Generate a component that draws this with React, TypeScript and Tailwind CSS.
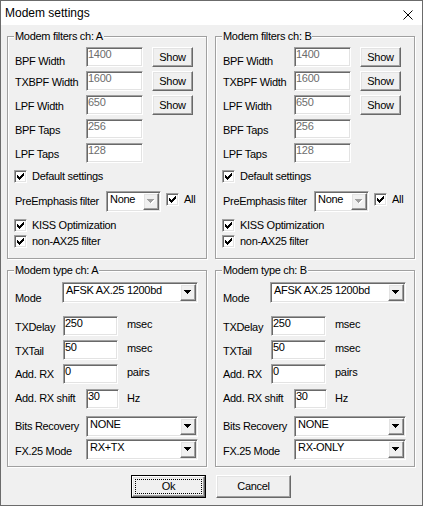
import React from 'react';

// classic win32 3D edges
const sunken =
  'border border-t-[#a0a0a0] border-l-[#a0a0a0] border-b-white border-r-white shadow-[inset_1px_1px_0_#696969,inset_-1px_-1px_0_#e3e3e3]';
const raised =
  'border border-t-white border-l-white border-b-[#696969] border-r-[#696969] shadow-[inset_-1px_-1px_0_#a0a0a0,inset_1px_1px_0_#e3e3e3]';

const CheckMark: React.FC = () => (
  <svg className="block" width="7" height="7" viewBox="0 0 7 7" shapeRendering="crispEdges">
    <path
      fill="#000"
      d="M6 0h1v1h-1z M5 1h2v1h-2z M0 2h1v1h-1z M4 2h3v1h-3z M0 3h2v1h-2z M3 3h3v1h-3z M0 4h5v1h-5z M1 5h3v1h-3z M2 6h1v1h-1z"
    />
  </svg>
);

const Arrow: React.FC<{ disabled?: boolean }> = ({ disabled }) => (
  <svg className="block" width="8" height="5" viewBox="0 0 8 5" shapeRendering="crispEdges">
    {disabled && <path fill="#fff" d="M1 1h7v1h-7z M2 2h5v1h-5z M3 3h3v1h-3z M4 4h1v1h-1z" />}
    <path
      fill={disabled ? '#a0a0a0' : '#000'}
      d="M0 0h7v1h-7z M1 1h5v1h-5z M2 2h3v1h-3z M3 3h1v1h-1z"
    />
  </svg>
);

const Edit: React.FC<{ value: string; className?: string; disabled?: boolean }> = ({
  value,
  className = '',
  disabled,
}) => (
  <div
    className={`${sunken} h-[20px] bg-white pl-[1px] leading-[13px] shrink-0 ${
      disabled ? 'text-[#6d6d6d]' : 'text-black'
    } ${className}`}
  >
    {value}
  </div>
);

const Combo: React.FC<{ value: string; className?: string; disabled?: boolean }> = ({
  value,
  className = '',
  disabled,
}) => (
  <div className={`${sunken} h-[21px] bg-white flex shrink-0 ${className}`}>
    <span className="flex-1 pl-[3px] pt-[1px] leading-[13px] whitespace-nowrap overflow-hidden">{value}</span>
    <span className={`${raised} w-[16px] m-px bg-[#f0f0f0] flex items-center justify-center`}>
      <Arrow disabled={disabled} />
    </span>
  </div>
);

const Btn: React.FC<{ children: React.ReactNode; className?: string }> = ({ children, className = '' }) => (
  <div className={`${raised} bg-[#f0f0f0] flex items-center justify-center shrink-0 ${className}`}>{children}</div>
);

const Check: React.FC<{ label: string; className?: string }> = ({ label, className = '' }) => (
  <div className={`flex items-center h-[13px] ${className}`}>
    <span className={`${sunken} w-[13px] h-[13px] bg-white pl-[2px] pt-[2px] shrink-0`}>
      <CheckMark />
    </span>
    <span className="ml-[5px] leading-[13px] whitespace-nowrap">{label}</span>
  </div>
);

const Group: React.FC<{ title: string; className?: string; children: React.ReactNode }> = ({
  title,
  className = '',
  children,
}) => (
  <div className={`relative border border-[#a0a0a0] shadow-[1px_1px_0_#fff,inset_1px_1px_0_#fff] ${className}`}>
    <span className="absolute left-[6px] -top-[7px] bg-[#f0f0f0] px-px leading-[13px] whitespace-nowrap">
      {title}
    </span>
    {children}
  </div>
);

const FRow: React.FC<{ label: string; value: string; show?: boolean; className?: string; lab: string }> = ({
  label,
  value,
  show,
  className = '',
  lab,
}) => (
  <div className={`flex items-start ${className}`}>
    <span className={`w-[71px] leading-[13px] whitespace-nowrap ${lab}`}>{label}</span>
    <Edit value={value} disabled className="w-[57px]" />
    {show && <Btn className="ml-[9px] w-[41px] h-[20px]">Show</Btn>}
  </div>
);

const FilterGroup: React.FC<{ ch: string }> = ({ ch }) => (
  <Group title={`Modem filters ch: ${ch}`} className="h-[223px] pl-[7px] pt-[10px]">
    <FRow label="BPF Width" value="1400" show lab="mt-[8px]" />
    <FRow label="TXBPF Width" value="1600" show lab="mt-[5px]" className="mt-[3px]" />
    <FRow label="LPF Width" value="650" show lab="mt-[5px]" className="mt-[4px]" />
    <FRow label="BPF Taps" value="256" lab="mt-[5px]" className="mt-[4px]" />
    <FRow label="LPF Taps" value="128" lab="mt-[5px]" className="mt-[4px]" />
    <Check label="Default settings" className="mt-[7px] -ml-px" />
    <div className="flex items-start mt-[8px]">
      <span className="w-[91px] mt-[4px] leading-[13px] whitespace-nowrap">PreEmphasis filter</span>
      <Combo value="None" disabled className="w-[55px]" />
      <Check label="All" className="ml-[5px] mt-[2px]" />
    </div>
    <Check label="KISS Optimization" className="mt-[7px] -ml-px" />
    <Check label="non-AX25 filter" className="mt-[3px] -ml-px" />
  </Group>
);

const TRow: React.FC<{
  label: string;
  value: string;
  unit: string;
  className?: string;
  lab: string;
}> = ({ label, value, unit, className = '', lab }) => (
  <div className={`flex items-start ${className}`}>
    <span className={`w-[48px] leading-[13px] whitespace-nowrap ${lab}`}>{label}</span>
    <Edit value={value} className="w-[55px]" />
    <span className="ml-[9px] mt-[2px] leading-[13px]">{unit}</span>
  </div>
);

const TypeGroup: React.FC<{ ch: string; fx: string }> = ({ ch, fx }) => (
  <Group title={`Modem type ch: ${ch}`} className="h-[197px] pl-[7px] pt-[11px]">
    <div className="flex items-start">
      <span className="w-[47px] mt-[10px] leading-[13px]">Mode</span>
      <Combo value="AFSK AX.25 1200bd" className="w-[136px]" />
    </div>
    <TRow label="TXDelay" value="250" unit="msec" lab="mt-[5px]" className="mt-[11px]" />
    <TRow label="TXTail" value="50" unit="msec" lab="mt-[5px]" className="mt-[4px]" />
    <TRow label="Add. RX" value="0" unit="pairs" lab="mt-[4px]" className="mt-[4px]" />
    <div className="flex items-start mt-[5px]">
      <span className="w-[71px] mt-[3px] leading-[13px] whitespace-nowrap">Add. RX shift</span>
      <Edit value="30" className="w-[33px]" />
      <span className="ml-[8px] mt-[3px] leading-[13px]">Hz</span>
    </div>
    <div className="flex items-start mt-[7px]">
      <span className="w-[71px] mt-[4px] leading-[13px] whitespace-nowrap">Bits Recovery</span>
      <Combo value="NONE" className="w-[112px]" />
    </div>
    <div className="flex items-start mt-[2px]">
      <span className="w-[71px] mt-[6px] leading-[13px] whitespace-nowrap">FX.25 Mode</span>
      <Combo value={fx} className="w-[112px]" />
    </div>
  </Group>
);

const App: React.FC = () => (
  <div className="w-[423px] h-[506px] border border-[#6b6b6b] bg-[#f0f0f0] flex flex-col text-black font-['Liberation_Sans',Arial,sans-serif] text-[11px] tracking-[-0.3px]">
    <div className="h-[24px] bg-white flex items-start justify-between pl-[4px] pr-[9px] shrink-0 tracking-normal">
      <span className="mt-[5px] text-[12px] leading-[14px]">Modem settings</span>
      <svg className="mt-[9px] block" width="10" height="10" viewBox="0 0 10 10">
        <path d="M0.5 0.5L9.5 9.5M9.5 0.5L0.5 9.5" stroke="#000" strokeWidth="1" />
      </svg>
    </div>
    <div className="flex-1 pl-[6px] pr-[7px] pt-[11px]">
      <div className="grid grid-cols-2 gap-x-[8px] gap-y-[11px]">
        <FilterGroup ch="A" />
        <FilterGroup ch="B" />
        <TypeGroup ch="A" fx="RX+TX" />
        <TypeGroup ch="B" fx="RX-ONLY" />
      </div>
      <div className="flex justify-center gap-[10px] mt-[8px]">
        <div className="border border-black h-[23px] w-[75px]">
          <div className={`${raised} h-full relative flex items-center justify-center`}>
            <span className="absolute inset-[2px] border border-dotted border-black" />
            Ok
          </div>
        </div>
        <Btn className="h-[23px] w-[75px]">Cancel</Btn>
      </div>
    </div>
  </div>
);

export default App;
